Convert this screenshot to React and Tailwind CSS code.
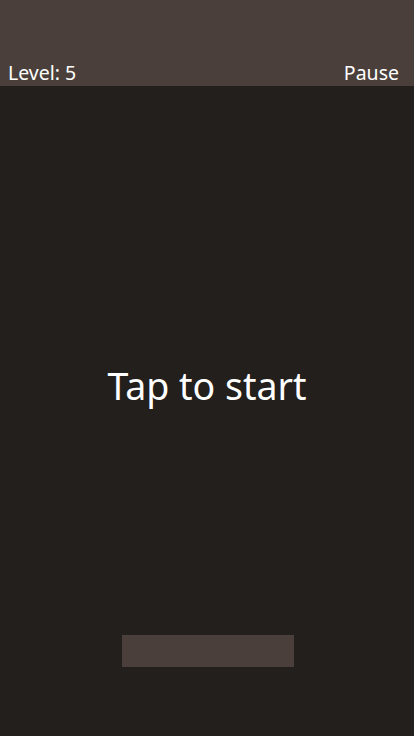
export default function App() {
  return (
    <div
      className="flex flex-col w-[414px] h-[736px] bg-[#231f1d] text-white overflow-hidden"
      style={{ fontFamily: '"Noto Sans", "Open Sans", sans-serif' }}
    >
      <div className="h-[86px] bg-[#4a3f3a] flex items-end justify-between pl-[8px] pr-[15px] pb-[1px]">
        <span className="text-[19.5px] leading-[25px]">Level: 5</span>
        <span className="text-[19.5px] leading-[25px]">Pause</span>
      </div>
      <div className="flex-1 flex flex-col items-center">
        <div className="h-[275px]" />
        <div className="text-[37.5px] leading-[50px]">Tap to start</div>
        <div className="h-[224px]" />
        <div className="w-[172px] h-[32px] bg-[#4a3f3a] ml-[2px]" />
      </div>
    </div>
  )
}
